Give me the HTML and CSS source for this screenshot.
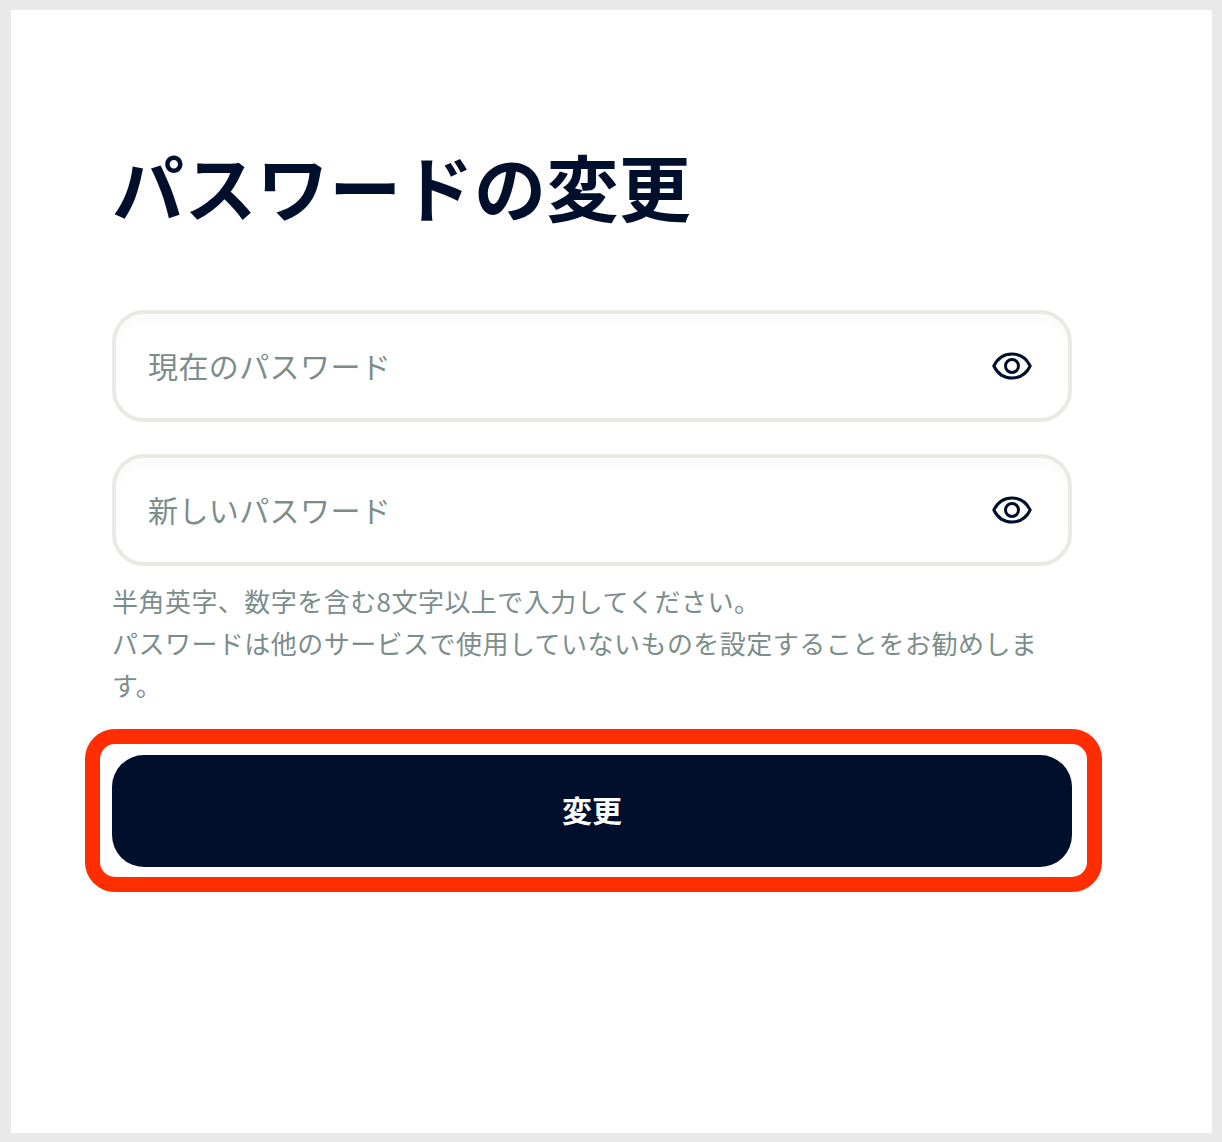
FILE: index.html
```html
<!DOCTYPE html>
<html lang="ja">
<head>
  <meta charset="UTF-8">
  <meta name="viewport" content="width=device-width, initial-scale=1.0">
  <title>パスワードの変更</title>
  <link rel="stylesheet" href="styles.css">
</head>
<body>
  <main class="card">
    <h1 class="title">パスワードの変更</h1>
    <form class="form">
      <div class="field">
        <span class="placeholder">現在のパスワード</span>
        <svg class="eye" viewBox="0 0 40 30" fill="none" stroke="#000f2b" stroke-width="3">
          <path d="M1.8 15C5.5 7.5 12 3 20 3s14.5 4.500 18.200 12C34.500 22.500 28 27 20 27S5.500 22.500 1.800 15Z" stroke-linejoin="round"/>
          <circle cx="20" cy="15" r="6.500"/>
        </svg>
      </div>
      <div class="field">
        <span class="placeholder">新しいパスワード</span>
        <svg class="eye" viewBox="0 0 40 30" fill="none" stroke="#000f2b" stroke-width="3">
          <path d="M1.8 15C5.5 7.5 12 3 20 3s14.5 4.500 18.200 12C34.500 22.500 28 27 20 27S5.500 22.500 1.800 15Z" stroke-linejoin="round"/>
          <circle cx="20" cy="15" r="6.500"/>
        </svg>
      </div>
      <p class="help">半角英字、数字を含む8文字以上で入力してください。<br>パスワードは他のサービスで使用していないものを設定することをお勧めします。</p>
      <div class="submit-wrap">
        <button type="button" class="submit">変更</button>
        <div class="highlight"></div>
      </div>
    </form>
  </main>
</body>
</html>
```

FILE: styles.css
```css
* {
  box-sizing: border-box;
}
body {
  margin: 0;
  padding: 10px 10px 9px 11px;
  height: 1142px;
  background-color: #e9e9e9;
  font-family: "Noto Sans CJK JP", "Noto Sans", sans-serif;
}
.card {
  height: 100%;
  background-color: #fff;
  padding: 131px 0 0 101px;
}
.title {
  margin: 0;
  font-size: 72px;
  line-height: 88px;
  font-weight: 700;
  letter-spacing: 0.4px;
  color: #000f2b;
}
.form {
  width: 960px;
  margin-top: 81px;
}
.field {
  display: flex;
  align-items: center;
  justify-content: space-between;
  height: 112px;
  margin-bottom: 32px;
  padding: 0 36px 0 32px;
  border: 4px solid #e9e9e6;
  border-radius: 32px;
  background-color: #fff;
  box-shadow: inset 0 8px 8px rgba(0, 0, 0, 0.02);
}
.placeholder {
  padding-bottom: 2px;
  font-size: 30px;
  letter-spacing: 0.4px;
  color: #7c8e8c;
}
.eye {
  width: 40px;
  height: 30px;
}
.help {
  margin: -18px 0 0;
  font-size: 26px;
  line-height: 42px;
  letter-spacing: 0.46px;
  color: #7c8e8c;
}
.submit-wrap {
  position: relative;
  margin-top: 49px;
}
.submit {
  display: block;
  width: 100%;
  height: 112px;
  padding: 0 0 5px;
  border: none;
  border-radius: 32px;
  background-color: #000f2b;
  color: #fff;
  font-family: inherit;
  font-size: 30px;
  font-weight: 700;
}
.highlight {
  position: absolute;
  top: -26px;
  left: -27px;
  right: -30px;
  bottom: -25px;
  border: 15px solid #ff2d00;
  border-radius: 30px;
}
```
